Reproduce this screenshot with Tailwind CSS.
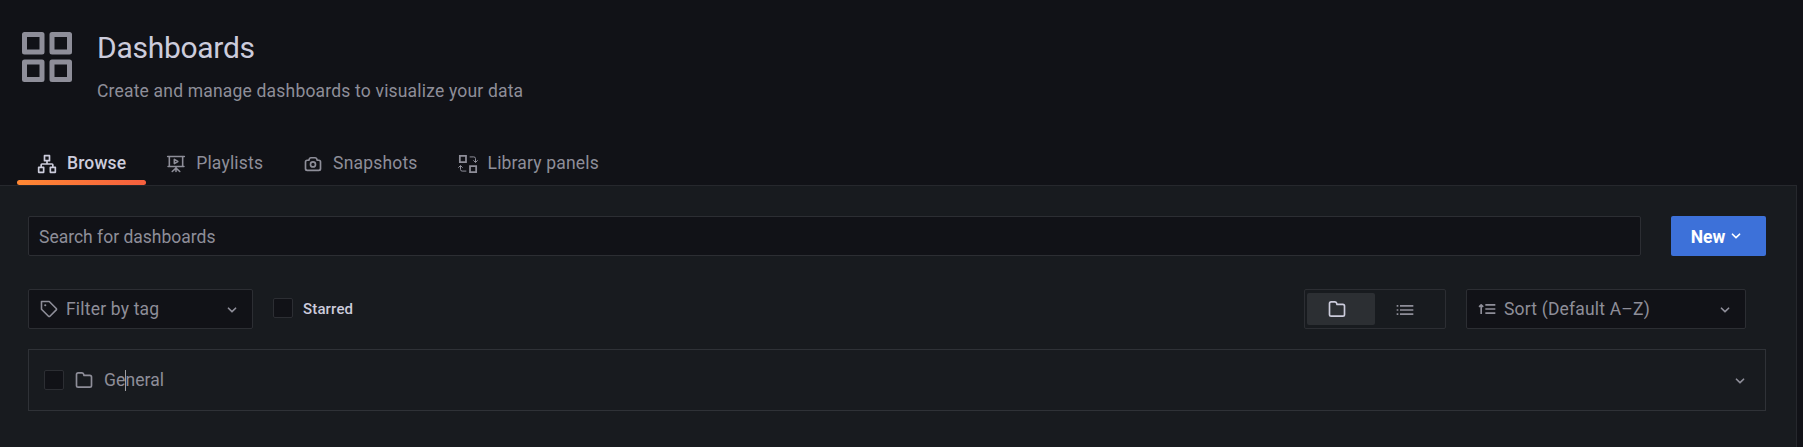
<!DOCTYPE html>
<html lang="en">
<head>
<meta charset="utf-8">
<title>Dashboards</title>
<script src="https://cdn.jsdelivr.net/npm/@tailwindcss/browser@4"></script>
</head>
<body class="flex h-[447px] flex-col overflow-hidden bg-[#111217] font-['Roboto',sans-serif] text-[17.5px] leading-[27px] tracking-[0.1875px] text-[#8e8e99]">
<svg class="hidden">
  <symbol id="chevron" viewBox="0 0 24 24"><path fill="currentColor" d="M17 9.17a1 1 0 0 0-1.41 0L12 12.71 8.46 9.17a1 1 0 0 0-1.41 1.42l4.24 4.24a1 1 0 0 0 1.42 0L17 10.59a1 1 0 0 0 0-1.42Z"/></symbol>
  <symbol id="folder" viewBox="0 0 24 24"><path fill="currentColor" d="M19 5.5h-6.28l-.32-1a3 3 0 0 0-2.84-2H5a3 3 0 0 0-3 3v13a3 3 0 0 0 3 3h14a3 3 0 0 0 3-3v-10a3 3 0 0 0-3-3Zm1 13a1 1 0 0 1-1 1H5a1 1 0 0 1-1-1v-13a1 1 0 0 1 1-1h4.56a1 1 0 0 1 .95.68l.54 1.64a1 1 0 0 0 .95.68h7a1 1 0 0 1 1 1Z"/></symbol>
</svg>
<header class="flex h-[135px] shrink-0 pl-[17px] pt-[27px]">
  <svg class="size-[60px]" viewBox="0 0 24 24" fill="currentColor"><path d="M10 13H3a1 1 0 0 0-1 1v7a1 1 0 0 0 1 1h7a1 1 0 0 0 1-1v-7a1 1 0 0 0-1-1Zm-1 7H4v-5h5ZM21 2h-7a1 1 0 0 0-1 1v7a1 1 0 0 0 1 1h7a1 1 0 0 0 1-1V3a1 1 0 0 0-1-1Zm-1 7h-5V4h5Zm1 4h-7a1 1 0 0 0-1 1v7a1 1 0 0 0 1 1h7a1 1 0 0 0 1-1v-7a1 1 0 0 0-1-1Zm-1 7h-5v-5h5ZM10 2H3a1 1 0 0 0-1 1v7a1 1 0 0 0 1 1h7a1 1 0 0 0 1-1V3a1 1 0 0 0-1-1ZM9 9H4V4h5Z"/></svg>
  <div class="pl-5">
    <h1 class="mt-px text-[30px] leading-[40px] tracking-[-0.28px] text-[#ccccdc]">Dashboards</h1>
    <p class="mt-[10px]">Create and manage dashboards to visualize your data</p>
  </div>
</header>
<nav class="flex h-[50px] shrink-0 pl-[17px]">
  <a class="relative flex items-center gap-2.5 px-5 pt-3 pb-[6px] font-medium tracking-[0.15px] text-[#ccccdc]">
    <svg class="mt-0.5 size-5" viewBox="0 0 24 24" fill="none" stroke="currentColor" stroke-width="2" stroke-linejoin="round"><path d="M9 2h6v6H9zM2 16h6v6H2zM16 16h6v6h-6zM12 8v4M5 16v-3a1 1 0 0 1 1-1h12a1 1 0 0 1 1 1v3"/></svg>
    Browse
    <span class="absolute inset-x-0 bottom-0 h-[5px] rounded-[2.5px] bg-[linear-gradient(90deg,#ff8833,#f55f3e)]"></span>
  </a>
  <a class="flex items-center gap-2.5 px-5 pt-3 pb-[6px] tracking-[0.18px]">
    <svg class="mt-0.5 size-5" viewBox="0 0 24 24" fill="none" stroke="currentColor" stroke-width="1.9" stroke-linecap="round" stroke-linejoin="round"><path d="M2 3h20M4 3v12h16V3M2.5 15h19M12 15v6M12 17l-4.5 4M12 17l4.5 4M10 6.5v5l4.2-2.5z"/></svg>
    Playlists
  </a>
  <a class="flex items-center gap-2.5 px-5 pt-3 pb-[6px] tracking-[0.18px]">
    <svg class="mt-0.5 size-5" viewBox="0 0 24 24" fill="currentColor"><path d="M19 6.5h-1.28l-.32-1a3 3 0 0 0-2.84-2H9.44A3 3 0 0 0 6.6 5.55l-.32 1H5a3 3 0 0 0-3 3v8a3 3 0 0 0 3 3h14a3 3 0 0 0 3-3v-8a3 3 0 0 0-3-3.05Zm1 11a1 1 0 0 1-1 1H5a1 1 0 0 1-1-1v-8a1 1 0 0 1 1-1h2a1 1 0 0 0 1-.68l.54-1.64a1 1 0 0 1 .95-.68h5.12a1 1 0 0 1 .95.68l.54 1.64a1 1 0 0 0 .9.68h2a1 1 0 0 1 1 1Zm-8-9a4 4 0 1 0 4 4 4 4 0 0 0-4-4Zm0 6a2 2 0 1 1 2-2 2 2 0 0 1-2 2Z"/></svg>
    Snapshots
  </a>
  <a class="flex items-center gap-2.5 px-5 pt-3 pb-[6px] tracking-[0.18px]">
    <svg class="mt-0.5 size-5" viewBox="0 0 24 24" fill="none" stroke="currentColor"><path stroke-width="2.1" d="M2.2 2.2h7.4v7.4H2.2zM14.4 14.4h7.4v7.4h-7.4z"/><path stroke-width="1.2" d="M14 3.5h5a2 2 0 0 1 2 2V10M18.4 7.6 21 10.2l2.6-2.6M10 20.5H5a2 2 0 0 1-2-2V14M.4 16.4 3 13.8l2.6 2.6"/></svg>
    Library panels
  </a>
</nav>
<main class="mr-[6px] flex-1 border-t border-r border-[#26282d] bg-[#181b1f] pl-7 pr-[30px] pt-[30px]">
  <div class="flex gap-[30px]">
    <div class="h-10 flex-1 rounded-[2px] border border-[#2c2e33] bg-[#111217] px-2.5 leading-[40px] tracking-normal">Search for dashboards</div>
    <button class="flex h-10 w-[95px] items-center rounded-[2px] bg-[#3d71d9] pl-[19.5px] font-bold tracking-normal text-white"><span class="mt-0.5 w-[35px]">New</span><svg class="size-5"><use href="#chevron"/></svg></button>
  </div>
  <div class="mt-[33px] flex items-center pr-5">
    <div class="flex h-10 w-[225px] items-center rounded-[2px] border border-[#2c2e33] bg-[#111217] pl-2.5">
      <svg class="size-5" viewBox="0 0 24 24" fill="none" stroke="currentColor" stroke-width="1.9" stroke-linejoin="round"><path d="M3 3h9.3l8.4 8.4a1.2 1.2 0 0 1 0 1.7l-7.6 7.6a1.2 1.2 0 0 1-1.7 0L3 12.3z"/><circle cx="7.5" cy="7.5" r="1.3" fill="currentColor" stroke="none"/></svg>
      <span class="ml-[7px]">Filter by tag</span>
      <svg class="mt-0.5 mr-2.5 ml-auto size-5"><use href="#chevron"/></svg>
    </div>
    <span class="ml-5 -mt-0.5 size-5 rounded-[2px] border border-[#2c2e33] bg-[#111217]"></span>
    <span class="ml-2.5 text-[15px] font-medium tracking-[0.15px] text-[#ccccdc]">Starred</span>
    <div class="ml-auto flex h-10 w-[142px] rounded-[2px] border border-[#2c2e33] py-[3px] pl-0.5">
      <div class="flex w-[68px] items-center justify-center rounded-[2px] bg-[#2c2f33] pr-2 text-[#ccccdc]"><svg class="size-5"><use href="#folder"/></svg></div>
      <div class="flex w-[68px] items-center justify-center pr-[9px] pt-0.5"><svg class="size-5" viewBox="0 0 24 24" fill="none" stroke="currentColor" stroke-width="2"><path d="M2 7h2M6 7h16M2 12h2M6 12h16M2 17h2M6 17h16"/></svg></div>
    </div>
    <div class="ml-5 flex h-10 w-[280px] items-center rounded-[2px] border border-[#2c2e33] bg-[#111217] pl-2.5">
      <svg class="size-5" viewBox="0 0 24 24" fill="none" stroke="currentColor" stroke-width="2" stroke-linejoin="round"><path d="M5 18V7M2.5 9.5 5 7 7.5 9.5M10 7h12M10 12h12M10 17h12"/></svg>
      <span class="ml-[7px]">Sort (Default A–Z)</span>
      <svg class="mt-0.5 mr-2.5 ml-auto size-5"><use href="#chevron"/></svg>
    </div>
  </div>
  <div class="mt-5 flex h-[62px] items-center border border-[#2f3237] pl-[15px]">
    <span class="size-5 rounded-[2px] border border-[#2c2e33] bg-[#111217]"></span>
    <svg class="ml-2.5 size-5"><use href="#folder"/></svg>
    <span class="relative ml-2.5 tracking-[0.1px]">General<span class="absolute left-[21px] top-[3px] h-[21px] w-px bg-[#a0a0a4]"></span></span>
    <svg class="mt-0.5 mr-[15px] ml-auto size-5"><use href="#chevron"/></svg>
  </div>
</main>
</body>
</html>
